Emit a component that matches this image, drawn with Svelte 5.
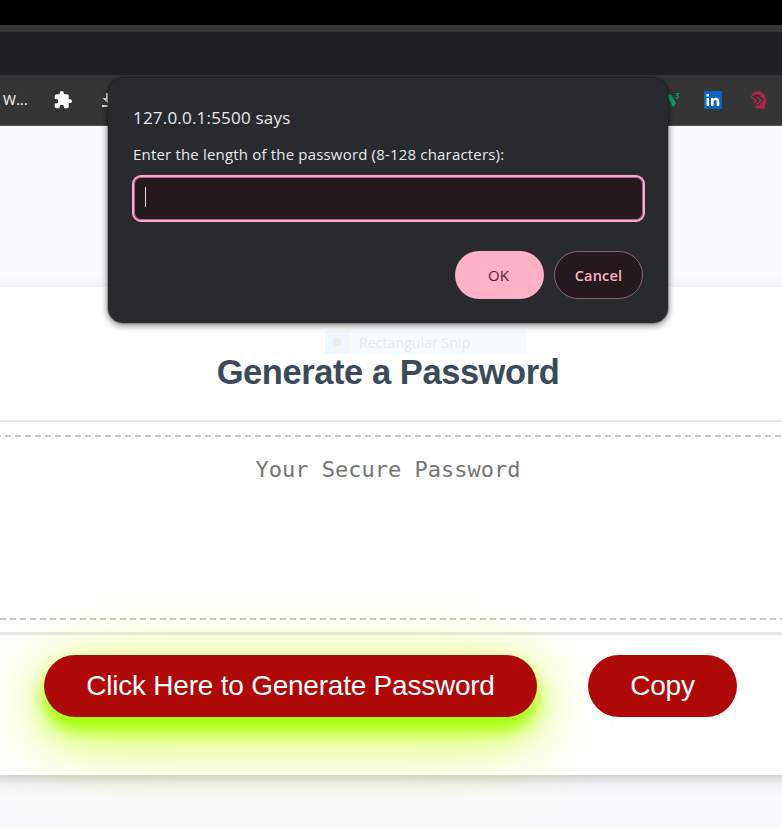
<script>
  const actions = [
    { label: 'Click Here to Generate Password', kind: 'generate' },
    { label: 'Copy', kind: 'copy' }
  ];
</script>

<div class="screen">
  <div class="black"></div>
  <div class="edge"></div>
  <div class="tabs"></div>
  <div class="bookmarks">
    <span class="bm-text">W...</span>
    <svg class="puzzle" viewBox="1 1 22 22"><path fill="#fff" d="M20.500 11H19V7c0-1.100-.9-2-2-2h-4V3.500a2.500 2.500 0 0 0-5 0V5H4c-1.100 0-2 .9-2 2v3.800h1.500a2.700 2.700 0 0 1 0 5.400H2V20c0 1.100.9 2 2 2h3.800v-1.500a2.700 2.700 0 0 1 5.400 0V22H17c1.100 0 2-.9 2-2v-4h1.500a2.500 2.500 0 0 0 0-5z"/></svg>
    <svg class="down" viewBox="0 0 14 16"><path fill="#ddd" d="M5 1h4v5h3.500L7 11.500 1.500 6H5zM1 13h12v2H1z"/></svg>
    <span class="grow"></span>
    <svg class="w3" viewBox="0 0 16 18"><path d="M2.500 3.500h4.500l5 9-3 4z" fill="#06a066"/><path d="M11.500 2.500h3l-1.700 2q1.700.2 1.700 1.500t-3 1.300" stroke="#06a066" stroke-width="1.100" fill="none"/></svg>
    <svg class="linkedin" viewBox="0 0 18 18"><rect width="18" height="18" rx="1" fill="#0a66c2"/><path fill="#fff" d="M2.500 7H5v8H2.500zM2.500 3H5v2.500H2.500zM7 7h2.400v1.200C10 7.200 11 6.800 12 6.800c2.200 0 3.300 1.400 3.300 3.500V15h-2.600v-4.200c0-1.200-.4-1.900-1.400-1.900s-1.700.7-1.700 1.900V15H7z"/></svg>
    <svg class="red" viewBox="0 0 18 18">
      <path fill="#ae2747" d="M1 4l4-4h7l4 4v4l1.500-.5L15.500 18H7l-2-2.500 4-.5 6-6-5-5.500L6 3 3.500 5z"/>
      <path fill="none" stroke="#ae2747" stroke-width="1.700" d="M1 5.500l5.500 4.500L4 12M7 5l4.500 4.500L6.500 14"/>
    </svg>
  </div>
  <main>
    <section class="card">
      <header><h2>Generate a Password</h2></header>
      <div class="body"><div class="password">Your Secure Password</div></div>
      <footer>
        {#each actions as a}
          <button class={a.kind}>{a.label}</button>
        {/each}
      </footer>
    </section>
  </main>
  <div class="snip"><i></i><span>Rectangular Snip</span></div>
  <div class="dialog">
    <div class="title"><span>127.0.0.1:5500 says</span></div>
    <div class="message"><span>Enter the length of the password (8-128 characters):</span></div>
    <div class="field"><b></b></div>
    <div class="choices">
      <button class="ok">OK</button>
      <button class="cancel">Cancel</button>
    </div>
  </div>
</div>

<style>
  :global(body) { margin: 0; }
  * { box-sizing: border-box; }
  .screen { position: relative; width: 782px; height: 828px; overflow: hidden; display: flex; flex-direction: column; background: #fafbfd; font-family: "Open Sans", sans-serif; }
  .black { height: 25px; background: #000; flex: none; }
  .edge { height: 7px; background: #353535; flex: none; }
  .tabs { height: 43px; background: #202124; flex: none; }
  .bookmarks { height: 51px; flex: none; background: #353535; border-bottom: 1px solid #505052; display: flex; align-items: center; padding-left: 3px; }
  .bm-text { color: #fff; font-size: 14px; width: 51px; letter-spacing: .2px; margin-top: -2px; }
  .puzzle { width: 18px; height: 18px; margin-right: 30px; }
  .down { width: 14px; height: 16px; margin-left: -1px; }
  .grow { flex: 1; }
  .w3 { width: 16px; height: 18px; margin-right: 24px; }
  .linkedin { width: 18px; height: 18px; margin-right: 28px; }
  .red { width: 17px; height: 18px; margin-right: 15px; }
  main { padding-top: 161px; }
  .card { height: 488px; margin: 0 -60px; background: #fff; box-shadow: 0 4px 8px rgba(0,0,0,.12), 0 6px 20px rgba(0,0,0,.09); }
  header { height: 135px; border-bottom: 2px solid #e7e7e7; padding-top: 64px; text-align: center; }
  h2 { margin: 0 6px 0 0; color: #3c4957; font: bold 34.500px/42px "Liberation Sans", Arial, sans-serif; letter-spacing: -.44px; white-space: nowrap; }
  .body { height: 213px; padding: 13px 60px 0; border-bottom: 3px solid #e8e9eb; }
  .password { height: 185px; padding: 21px 6px 0 0; text-align: center; color: #757575; font: 22px/28px "DejaVu Sans Mono", monospace; background: linear-gradient(90deg, #c2c7cf 6.500px, transparent 6.500px) 5px 0 / 10px 2px repeat-x, linear-gradient(90deg, #c2c7cf 6px, transparent 6px) 0 100% / 10px 2px repeat-x; }
  footer { display: flex; gap: 51px; padding: 20px 0 0 104px; }
  footer button { height: 62px; border: 0; border-radius: 31px; padding: 0; color: #fff; background: #af0808; font: 28px/62px "Liberation Sans", Arial, sans-serif; letter-spacing: -.23px; white-space: nowrap; }
  .generate { width: 493px; box-shadow: 0 12px 16px 0 #a0ff08, 0 17px 50px 0 rgba(200,255,0,.8), 0 17px 100px 0 rgba(215,245,20,.35); }
  .copy { width: 149px; position: relative; }
  .snip { position: absolute; left: 325px; top: 330px; width: 202px; height: 24px; background: linear-gradient(90deg, #f0f7ff 24px, #f6fbfe 24px); display: flex; align-items: center; padding-left: 8px; color: #e9eaeb; font-size: 14px; }
  .snip i { width: 8px; height: 8px; border-radius: 50%; background: #ececec; margin-right: 18px; }
  .snip span { white-space: nowrap; letter-spacing: .1px; }
  .dialog { position: absolute; left: 108px; top: 78px; width: 560px; height: 245px; border-radius: 15px; background: #292a2d; box-shadow: 0 0 1px 1px rgba(0,0,0,.25), 0 2px 6px 1px rgba(0,0,0,.42); padding: 28px 23px 0 24px; color: #e8eaed; }
  .title { height: 24px; font-size: 17px; line-height: 24px; padding-left: 1px; letter-spacing: .2px; }
  .message { height: 20px; margin-top: 14px; font-size: 15px; line-height: 20px; padding-left: 1px; letter-spacing: .18px; }
  .title span, .message span { display: inline-block; white-space: nowrap; }
  .field { height: 47px; margin-top: 11px; border: 2px solid #ffa5d5; border-radius: 9px; background: #24191c; padding: 10px 0 0 11px; box-shadow: inset 0 0 0 1px #a06c88; }
  .field b { display: block; width: 1px; height: 20px; background: #ddd; }
  .choices { display: flex; justify-content: flex-end; gap: 10px; margin-top: 29px; padding-right: 2px; }
  .choices button { width: 89px; height: 48px; border: 0; border-radius: 24px; font: 600 14px "Open Sans", sans-serif; padding: 0; }
  .choices .ok { background: #ffb1c8; color: #5c1934; font-size: 15px; font-weight: 500; padding-right: 2px; }
  .choices .cancel { background: #24191c; color: #ffb1c8; border: 1px solid #8b6470; font-size: 14.500px; letter-spacing: .2px; }
</style>
